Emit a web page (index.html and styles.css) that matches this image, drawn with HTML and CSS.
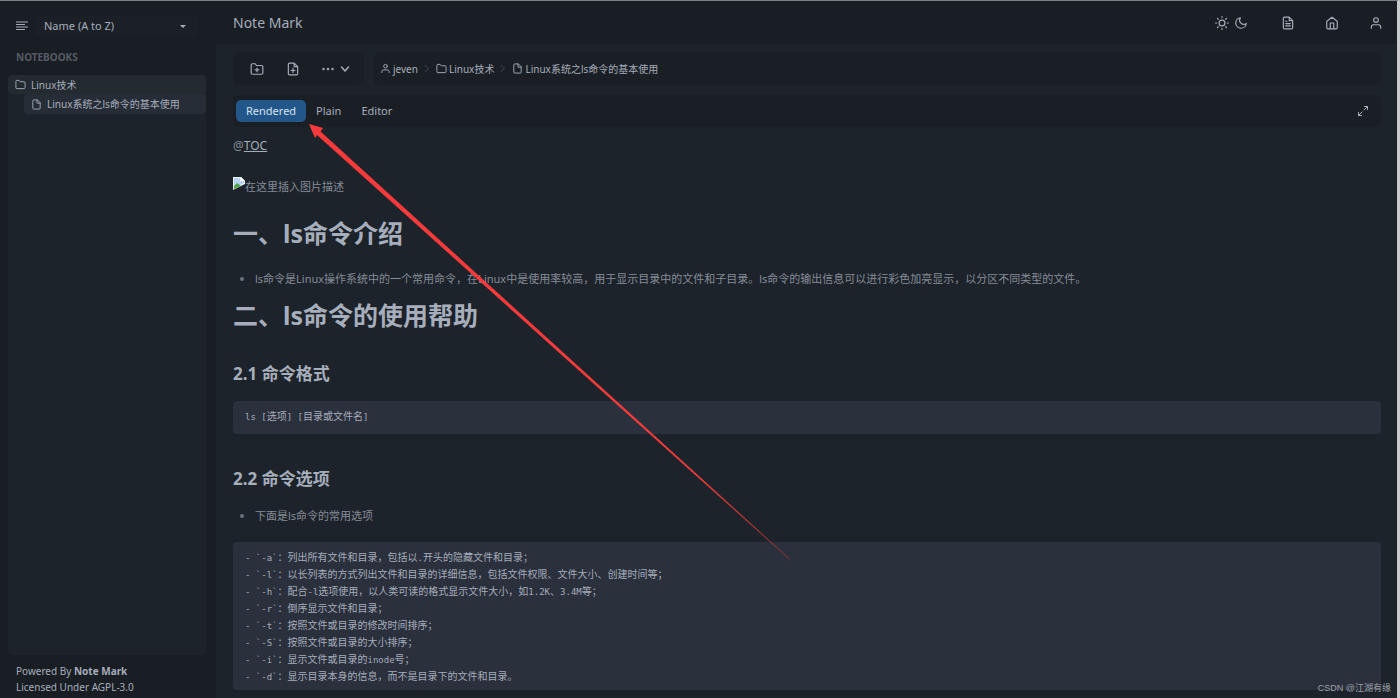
FILE: index.html
```
<!DOCTYPE html>
<html lang="zh-CN">
<head>
<meta charset="utf-8">
<title>Note Mark</title>
<link rel="stylesheet" href="styles.css">
</head>
<body>
<svg class="sprite" aria-hidden="true">
  <symbol id="folder" viewBox="0 0 24 24"><path d="M22 19a2 2 0 0 1-2 2H4a2 2 0 0 1-2-2V5a2 2 0 0 1 2-2h5l2 3h9a2 2 0 0 1 2 2z"/></symbol>
  <symbol id="folder-plus" viewBox="0 0 24 24"><path d="M22 19a2 2 0 0 1-2 2H4a2 2 0 0 1-2-2V5a2 2 0 0 1 2-2h5l2 3h9a2 2 0 0 1 2 2zM12 10.500v6M9 13.500h6"/></symbol>
  <symbol id="file" viewBox="0 0 24 24"><path d="M13 2H6a2 2 0 0 0-2 2v16a2 2 0 0 0 2 2h12a2 2 0 0 0 2-2V9zM13 2v7h7"/></symbol>
  <symbol id="file-plus" viewBox="0 0 24 24"><path d="M14 2H6a2 2 0 0 0-2 2v16a2 2 0 0 0 2 2h12a2 2 0 0 0 2-2V8zM14 2v6h6M12 11v7M8.500 14.500h7"/></symbol>
  <symbol id="file-text" viewBox="0 0 24 24"><path d="M14 2H6a2 2 0 0 0-2 2v16a2 2 0 0 0 2 2h12a2 2 0 0 0 2-2V8zM14 2v6h6M16 13H8M16 17H8M10 9H8"/></symbol>
  <symbol id="user" viewBox="0 0 24 24"><path d="M20 21v-2a4 4 0 0 0-4-4H8a4 4 0 0 0-4 4v2"/><circle cx="12" cy="7" r="4"/></symbol>
  <symbol id="home" viewBox="0 0 24 24"><path d="M3 9l9-7 9 7v11a2 2 0 0 1-2 2H5a2 2 0 0 1-2-2zM9 22V12h6v10"/></symbol>
  <symbol id="sun" viewBox="0 0 24 24"><circle cx="12" cy="12" r="5"/><path d="M12 1v2M12 21v2M4.200 4.200l1.400 1.400M18.400 18.400l1.400 1.400M1 12h2M21 12h2M4.200 19.800l1.400-1.400M18.400 5.600l1.400-1.400"/></symbol>
  <symbol id="moon" viewBox="0 0 24 24"><path d="M21 12.800A9 9 0 1 1 11.200 3 7 7 0 0 0 21 12.800z"/></symbol>
  <symbol id="menu" viewBox="0 0 24 24"><path d="M1 4h22M1 9h16M1 14h22M1 19h16"/></symbol>
  <symbol id="chevron-right" viewBox="0 0 24 24"><path d="M7 4l9 8-9 8"/></symbol>
  <symbol id="chevron-down" viewBox="0 0 24 24"><path d="M5 8l7 8 7-8"/></symbol>
  <symbol id="dots" viewBox="0 0 24 24"><circle cx="3" cy="12" r="1"/><circle cx="12" cy="12" r="1"/><circle cx="21" cy="12" r="1"/></symbol>
  <symbol id="expand" viewBox="0 0 24 24"><path d="M15 3h6v6M9 21H3v-6M21 3l-7 7M3 21l7-7"/></symbol>
</svg>

<div class="app">
  <aside class="sidebar">
    <div class="sort-row">
      <button class="icon-button" aria-label="Toggle sidebar"><svg class="icon medium"><use href="#menu"/></svg></button>
      <div class="select-wrap">
        <select class="sort" aria-label="Sort notebooks"><option>Name (A to Z)</option></select>
      </div>
    </div>
    <h2 class="side-title">NOTEBOOKS</h2>
    <nav class="tree">
      <a class="tree-item" href="#"><svg class="icon small"><use href="#folder"/></svg>Linux技术</a>
      <a class="tree-item child" href="#"><svg class="icon small"><use href="#file"/></svg>Linux系统之ls命令的基本使用</a>
    </nav>
    <footer class="side-footer">
      <div>Powered By <b>Note Mark</b></div>
      <div>Licensed Under AGPL-3.0</div>
    </footer>
  </aside>

  <div class="page">
    <header class="topbar">
      <div class="brand">Note Mark</div>
      <div class="top-actions">
        <button class="icon-button theme" aria-label="Theme"><svg class="icon"><use href="#sun"/></svg><svg class="icon"><use href="#moon"/></svg></button>
        <button class="icon-button" aria-label="Documents"><svg class="icon"><use href="#file-text"/></svg></button>
        <button class="icon-button" aria-label="Home"><svg class="icon"><use href="#home"/></svg></button>
        <button class="icon-button" aria-label="Account"><svg class="icon"><use href="#user"/></svg></button>
      </div>
    </header>

    <main class="content">
      <div class="tool-row">
        <div class="panel tools">
          <button class="icon-button" aria-label="New notebook"><svg class="icon"><use href="#folder-plus"/></svg></button>
          <button class="icon-button" aria-label="New note"><svg class="icon"><use href="#file-plus"/></svg></button>
          <button class="icon-button more" aria-label="More"><svg class="icon medium bold"><use href="#dots"/></svg><svg class="icon medium bold"><use href="#chevron-down"/></svg></button>
        </div>
        <nav class="panel crumbs">
          <a href="#"><svg class="icon small"><use href="#user"/></svg>jeven</a>
          <svg class="icon sep"><use href="#chevron-right"/></svg>
          <a href="#"><svg class="icon small"><use href="#folder"/></svg>Linux技术</a>
          <svg class="icon sep"><use href="#chevron-right"/></svg>
          <a href="#"><svg class="icon small"><use href="#file"/></svg>Linux系统之ls命令的基本使用</a>
        </nav>
      </div>

      <div class="panel tabs">
        <button class="tab active">Rendered</button>
        <button class="tab">Plain</button>
        <button class="tab">Editor</button>
        <button class="icon-button expand" aria-label="Full screen"><svg class="icon medium"><use href="#expand"/></svg></button>
      </div>

      <article class="note">
        <p class="toc">@<a href="#">TOC</a></p>
        <p class="missing"><svg class="broken" viewBox="0 0 12 14"><path fill="#eef3f6" d="M0 0h8l4 4v3L0 13z"/><path fill="#b9d4f2" d="M1 1h6v3h4v2l-7 4-3-1z"/><path fill="#4fa64a" d="M1 12V9l3-3 4 3z"/><path fill="#fff" d="M8 0v4h4z"/></svg>在这里插入图片描述</p>
        <h1>一、ls命令介绍</h1>
        <ul><li>ls命令是Linux操作系统中的一个常用命令，在Linux中是使用率较高，用于显示目录中的文件和子目录。ls命令的输出信息可以进行彩色加亮显示，以分区不同类型的文件。</li></ul>
        <h1>二、ls命令的使用帮助</h1>
        <h2>2.1 命令格式</h2>
        <pre><code>ls [<span>选项</span>] [<span>目录或文件名</span>]</code></pre>
        <h2>2.2 命令选项</h2>
        <ul><li>下面是ls命令的常用选项</li></ul>
        <pre class="lines"><code>- `-a`<span>：列出所有文件和目录，包括以</span>.<span>开头的隐藏文件和目录；</span>
- `-l`<span>：以长列表的方式列出文件和目录的详细信息，包括文件权限、文件大小、创建时间等；</span>
- `-h`<span>：配合</span>-l<span>选项使用，以人类可读的格式显示文件大小，如</span>1.2K<span>、</span>3.4M<span>等；</span>
- `-r`<span>：倒序显示文件和目录；</span>
- `-t`<span>：按照文件或目录的修改时间排序；</span>
- `-S`<span>：按照文件或目录的大小排序；</span>
- `-i`<span>：显示文件或目录的</span>inode<span>号；</span>
- `-d`<span>：显示目录本身的信息，而不是目录下的文件和目录。</span></code></pre>
      </article>
    </main>
  </div>
</div>
<svg class="arrow" viewBox="0 0 482 436" aria-hidden="true">
  <defs><linearGradient id="fade" x1="0" y1="0" x2="1" y2="1"><stop offset="0.800" stop-color="#fb3b3b"/><stop offset="1" stop-color="#fb3b3b" stop-opacity="0.400"/></linearGradient></defs>
  <path fill="url(#fade)" d="M0 0l14 4-2.500 3.500 469 427-.6.6L8 11l-2 3z"/>
</svg>
<div class="watermark">CSDN @江湖有缘</div>
</body>
</html>
```
FILE: styles.css
```
* { box-sizing: border-box; }

body {
  margin: 0;
  height: 100vh;
  overflow: hidden;
  background: #1d232a;
  color: #a6adbb;
  font: 11px/16px "Noto Sans", "Noto Sans CJK SC", sans-serif;
}

a { color: inherit; text-decoration: none; }

button, select {
  border: 0;
  background: none;
  color: inherit;
  font: inherit;
}

.sprite { display: none; }

.icon {
  width: 14px;
  height: 14px;
  flex: none;
  fill: none;
  stroke: currentColor;
  stroke-width: 2;
  stroke-linecap: round;
  stroke-linejoin: round;
}
.icon.small { width: 11px; height: 11px; }
.icon.medium { width: 12px; height: 12px; }
.icon.bold { stroke-width: 3; }

.icon-button { display: flex; padding: 0; }

.app {
  display: flex;
  height: 100vh;
  border-top: 1px solid #7c8286;
  border-right: 3px solid #c9cccf;
}

.sidebar {
  display: flex;
  flex-direction: column;
  width: 216px;
  flex: none;
  padding: 14px 10px 0 8px;
  background: #191e24;
}

.sort-row {
  display: flex;
  align-items: center;
  gap: 8px;
  padding: 0 8px;
}

.select-wrap {
  position: relative;
  flex: 1;
}
.select-wrap::after {
  content: "";
  position: absolute;
  right: 12px;
  top: 10px;
  border: 3px solid transparent;
  border-top-color: #a6adbb;
}

.sort {
  width: 100%;
  height: 22px;
  padding: 0 8px;
  appearance: none;
  border-radius: 4px;
  background: #1b2027;
}

.side-title {
  margin: 12px 8px 10px;
  color: #545b65;
  font-size: 10px;
  line-height: 16px;
}

.tree {
  flex: 1;
  border-radius: 5px;
  background: #1d232a;
  font-size: 10px;
}

.tree-item {
  display: flex;
  align-items: center;
  gap: 5px;
  height: 19px;
  padding-left: 7px;
  border-radius: 4px;
  background: #232a30;
}
.tree-item.child {
  height: 20px;
  margin-left: 16px;
  background: #262d37;
}

.side-footer { padding: 8px 8px 3px; font-size: 10px; line-height: 16px; }

.page {
  display: flex;
  flex: 1;
  flex-direction: column;
  min-width: 0;
}

.topbar {
  display: flex;
  align-items: center;
  justify-content: space-between;
  height: 43px;
  flex: none;
  padding: 0 14px 0 17px;
  background: #191e24;
}
.brand { font-size: 14px; line-height: 20px; }
.top-actions { display: flex; gap: 30px; }
.theme { gap: 5px; margin-right: 3px; }

.content {
  padding: 8px 16px 0 17px;
  overflow: hidden;
}

.panel {
  border-radius: 6px;
  background: #1a1f25;
}

.tool-row { display: flex; gap: 10px; }
.tools {
  display: flex;
  align-items: center;
  gap: 22px;
  width: 131px;
  height: 33px;
  padding-left: 17px;
}
.more { gap: 5px; }

.crumbs {
  display: flex;
  flex: 1;
  align-items: center;
  gap: 4px;
  padding-left: 6px;
  font-size: 10px;
}
.crumbs a { display: flex; align-items: center; gap: 2px; }
.icon.sep { width: 10px; height: 9px; color: #4b525c; }

.tabs {
  display: flex;
  align-items: center;
  height: 32px;
  margin-top: 10px;
  padding: 0 12px 0 3px;
}
.tab {
  height: 22px;
  padding: 0 10px;
  border-radius: 5px;
}
.tab.active { background: #23578a; color: #d5e1ee; }
.expand { margin-left: auto; }

.note { padding-top: 9px; color: #858c98; }
.note p { margin: 0; line-height: 20px; }
.note .toc { font-size: 12px; }
.toc a { text-decoration: underline; color: #a6adbb; }
.note .missing { display: flex; margin-top: 21px; }
.broken { width: 12px; height: 14px; flex: none; }

.note h1, .note h2 { color: #a6adbb; font-weight: 700; }
.note h1 { margin: 20px 0; font-size: 25px; line-height: 32px; }
.note h2 { margin: 32px 0 16px; font-size: 17px; line-height: 22px; }

.note ul { margin: 0; padding-left: 22px; line-height: 20px; }
.note li::marker { color: #6b727e; }
.note ul + h1 { margin-top: 10px; }
.note ul + pre { margin-top: 16px; }
.note pre + h2 { margin-top: 34px; }

.note pre {
  margin: 0;
  padding: 8px 12px;
  border-radius: 4px;
  background: #2a303c;
  color: #a6adbb;
  font-size: 9px;
  line-height: 17px;
}
.note pre.lines { padding: 8px 12px 4px; }
.note code { font-family: "DejaVu Sans Mono", monospace; font-size: 9px; }
.note code span { font-family: "Noto Sans CJK SC", sans-serif; font-size: 10px; line-height: 1; }

.arrow {
  position: absolute;
  left: 309px;
  top: 124px;
  width: 482px;
  height: 436px;
  pointer-events: none;
}

.watermark {
  position: absolute;
  right: 9px;
  bottom: 2px;
  color: #9ba0a8;
  font: 9px/16px "Liberation Sans", "Noto Sans CJK SC", sans-serif;
}
```
